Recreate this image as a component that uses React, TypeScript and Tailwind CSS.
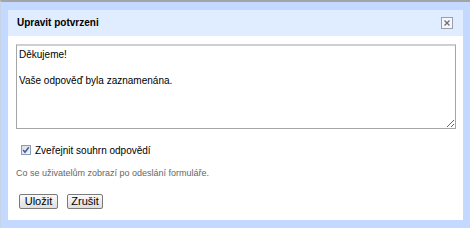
export default function App() {
  return (
    <div
      className="w-[470px] h-[228px] bg-[#c3d9ff] border-t-2 border-t-[#a4a4a4] border-l border-l-[#c9d3e6] px-[7px] pt-[8px] pb-[8px] box-border"
      style={{ fontFamily: '"Liberation Sans", Arial, sans-serif' }}
    >
      <div className="flex flex-col w-[455px] h-[210px] bg-white">
        <div className="flex h-[26px] items-center justify-between bg-[#e0ecff] pl-[9px] pr-[10px]">
          <span className="text-[10px] font-bold text-black leading-none">Upravit potvrzeni</span>
          <div className="flex h-[12px] w-[12px] items-center justify-center border border-[#9aa0aa] bg-[#f4f7fc]">
            <svg width="6" height="6" viewBox="0 0 6 6">
              <path d="M0.5 0.5L5.5 5.5M5.5 0.5L0.5 5.5" stroke="#6e6e6e" strokeWidth="1.3" />
            </svg>
          </div>
        </div>
        <div className="flex flex-col pl-[8px] pr-[7px] pt-[8px]">
          <textarea
            readOnly
            className="h-[85px] w-full resize border border-[#a5a5a5] border-t-2 border-t-[#cfcfcf] px-[2px] py-[2px] text-[10px] leading-[13px] text-black outline-none"
            defaultValue={"Děkujeme!\n\nVaše odpověď byla zaznamenána."}
          />
          <div className="mt-[14px] flex h-[14px] items-center pl-[5px]">
            <span className="flex h-[10px] w-[10px] items-center justify-center border border-[#8a9cb8] bg-gradient-to-br from-[#d8dce6] to-[#f6f7fa]">
              <svg width="8" height="8" viewBox="0 0 8 8">
                <path d="M1.2 4L3 6.2L6.8 1.3" fill="none" stroke="#3f5a9c" strokeWidth="1.5" />
              </svg>
            </span>
            <span className="ml-[4px] text-[10px] text-black">Zveřejnit souhrn odpovědí</span>
          </div>
          <div className="mt-[10px] h-[12px] text-[9px] leading-[12px] text-[#666]">
            Co se uživatelům zobrazí po odeslání formuláře.
          </div>
          <div className="mt-[15px] flex gap-[9px] pl-[3px]">
            <button className="flex h-[15px] w-[39px] items-center justify-center rounded-[2px] border border-[#7a7a7a] bg-gradient-to-b from-[#fafafa] to-[#dedede] text-[11px] leading-none text-black">
              Uložit
            </button>
            <button className="flex h-[15px] w-[36px] items-center justify-center rounded-[2px] border border-[#7a7a7a] bg-gradient-to-b from-[#fafafa] to-[#dedede] text-[11px] leading-none text-black">
              Zrušit
            </button>
          </div>
        </div>
      </div>
    </div>
  );
}
